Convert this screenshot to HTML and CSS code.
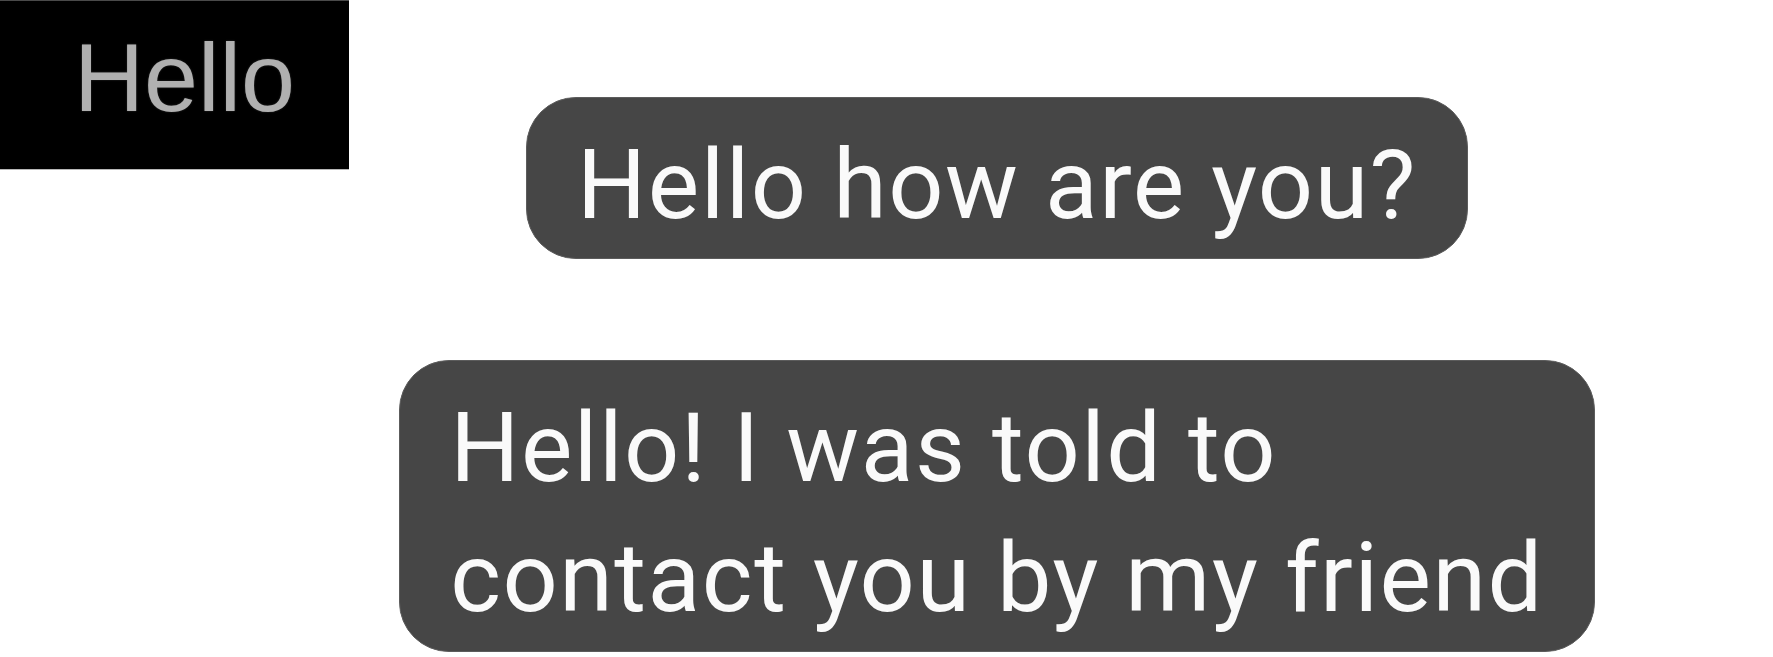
FILE: index.html
```html
<!DOCTYPE html>
<html lang="en">
<head>
    <meta charset="UTF-8">
    <meta name="viewport" content="width=device-width, initial-scale=1.0">
    <title>Chat</title>
    <link rel="stylesheet" href="styles.css">
</head>
<body>
    <div class="page">
        <div class="badge">
            <span class="badge-text">Hello</span>
        </div>
        <div class="chat">
            <div class="bubble">Hello how are you?</div>
            <div class="bubble">Hello! I was told to<br>contact you by my friend</div>
        </div>
    </div>
</body>
</html>
```

FILE: styles.css
```css
body {
    margin: 0;
    padding: 0;
    background: #ffffff;
    font-family: Roboto, "Liberation Sans", sans-serif;
}
.page {
    display: flex;
    align-items: flex-start;
}
.badge {
    width: 349px;
    height: 170px;
    box-sizing: border-box;
    background: #000000;
    border-top: 1px solid #4a4a4a;
    border-bottom: 1px solid #b8b8b8;
    display: flex;
    align-items: center;
    justify-content: center;
    padding-left: 20px;
    padding-bottom: 16px;
    flex-shrink: 0;
}
.badge-text {
    font-family: "Liberation Sans", Arial, sans-serif;
    font-size: 97px;
    line-height: 1;
    color: #b0b0b0;
    text-shadow: 0 0 2px rgba(255, 255, 255, 0.2);
}
.chat {
    flex: 1;
    display: flex;
    flex-direction: column;
    align-items: center;
    gap: 101px;
    padding-top: 97px;
    padding-right: 128px;
}
.bubble {
    background: #464646;
    color: #fafafa;
    font-size: 97px;
    line-height: 130px;
    letter-spacing: 1.5px;
    padding: 22px 50px 8px 50px;
    border-radius: 50px;
    border: 1px solid #5c5c5c;
    white-space: nowrap;
}
```
